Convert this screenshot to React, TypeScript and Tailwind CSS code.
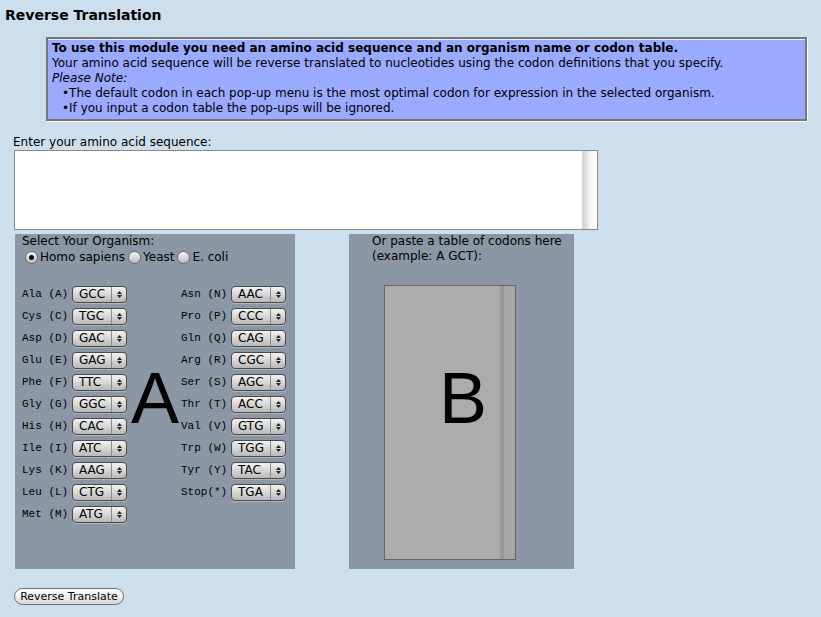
import React from 'react';

const LEFT: [string, string][] = [
  ['Ala (A)', 'GCC'],
  ['Cys (C)', 'TGC'],
  ['Asp (D)', 'GAC'],
  ['Glu (E)', 'GAG'],
  ['Phe (F)', 'TTC'],
  ['Gly (G)', 'GGC'],
  ['His (H)', 'CAC'],
  ['Ile (I)', 'ATC'],
  ['Lys (K)', 'AAG'],
  ['Leu (L)', 'CTG'],
  ['Met (M)', 'ATG'],
];

const RIGHT: [string, string][] = [
  ['Asn (N)', 'AAC'],
  ['Pro (P)', 'CCC'],
  ['Gln (Q)', 'CAG'],
  ['Arg (R)', 'CGC'],
  ['Ser (S)', 'AGC'],
  ['Thr (T)', 'ACC'],
  ['Val (V)', 'GTG'],
  ['Trp (W)', 'TGG'],
  ['Tyr (Y)', 'TAC'],
  ['Stop(*)', 'TGA'],
];

const CodonSelect: React.FC<{ value: string }> = ({ value }) => (
  <div className="w-[55px] h-[17px] rounded-[4px] border border-[#4a4a4a] bg-gradient-to-b from-[#f2f2f2] via-[#d6d6d6] to-[#b8b8b8] flex items-center shadow-[0_1px_0_rgba(255,255,255,0.3)]">
    <span className="flex-1 pl-[6px] text-[12px] leading-none text-black">{value}</span>
    <span className="h-full w-px bg-[#8a8a8a]" />
    <span className="w-[14px] flex flex-col items-center justify-center gap-[1px]">
      <svg width="5" height="3" viewBox="0 0 5 3"><path d="M2.5 0L5 3H0z" fill="#222" /></svg>
      <svg width="5" height="3" viewBox="0 0 5 3"><path d="M0 0h5L2.5 3z" fill="#222" /></svg>
    </span>
  </div>
);

const CodonRow: React.FC<{ label: string; value: string }> = ({ label, value }) => (
  <div className="flex items-center h-[22px]">
    <span className="w-[50px] font-['Liberation_Mono',monospace] text-[11px] text-black whitespace-pre">{label}</span>
    <CodonSelect value={value} />
  </div>
);

const Radio: React.FC<{ checked?: boolean; label: string }> = ({ checked, label }) => (
  <label className="flex items-center gap-[2px] mr-[3px]">
    <span className="w-[13px] h-[13px] rounded-full border border-[#6a6a6a] bg-gradient-to-b from-[#f4f4f4] to-[#bdbdbd] flex items-center justify-center">
      {checked && <span className="w-[5px] h-[5px] rounded-full bg-[#111]" />}
    </span>
    <span>{label}</span>
  </label>
);

export default function App() {
  return (
    <div className="min-h-[617px] bg-[#cddeed] font-['DejaVu_Sans',Verdana,sans-serif] text-black">
      <h1 className="px-[5px] pt-[7px] text-[14px] font-bold leading-[16px]">Reverse Translation</h1>

      {/* Info box */}
      <div className="ml-[46px] mt-[14px] w-[761px] h-[84px] border-2 border-[#777] bg-[#99aaff] shadow-[1px_1px_0_#fff,inset_0_1px_0_#e8ecff] pl-[4px] pt-[2px] text-[12px] leading-[15px]">
        <p className="font-bold">To use this module you need an amino acid sequence and an organism name or codon table.</p>
        <p>Your amino acid sequence will be reverse translated to nucleotides using the codon definitions that you specify.</p>
        <p className="italic">Please Note:</p>
        <p className="pl-[10px]">•The default codon in each pop-up menu is the most optimal codon for expression in the selected organism.</p>
        <p className="pl-[10px]">•If you input a codon table the pop-ups will be ignored.</p>
      </div>

      {/* Sequence entry */}
      <p className="ml-[13px] mt-[14px] text-[12px] leading-[15px]">Enter your amino acid sequence:</p>
      <div className="ml-[14px] w-[584px] h-[80px] border border-[#888] bg-white flex justify-end">
        <div className="w-[15px] h-full bg-gradient-to-r from-[#cfcfcf] via-[#f5f5f5] to-[#ffffff] border-l border-[#d8d8d8]" />
      </div>

      {/* Panels */}
      <div className="flex gap-[54px] mt-[4px] ml-[15px] text-[12px]">
        <div className="relative w-[280px] h-[335px] bg-[#8b97a4] pl-[7px]">
          <p className="leading-[15px]">Select Your Organism:</p>
          <div className="flex items-center h-[16px] pl-[3px]">
            <Radio checked label="Homo sapiens" />
            <Radio label="Yeast" />
            <Radio label="E. coli" />
          </div>
          <div className="grid grid-cols-[159px_1fr] mt-[18px]">
            <div>
              {LEFT.map(([l, v]) => (
                <CodonRow key={l} label={l} value={v} />
              ))}
            </div>
            <div>
              {RIGHT.map(([l, v]) => (
                <CodonRow key={l} label={l} value={v} />
              ))}
            </div>
          </div>
          <span className="absolute left-[116px] top-[128px] font-['Liberation_Sans',Arial,sans-serif] text-[72px] leading-none">A</span>
        </div>

        <div className="w-[225px] h-[335px] bg-[#8b97a4]">
          <p className="pl-[23px] leading-[15px]">
            Or paste a table of codons here
            <br />
            (example: A GCT):
          </p>
          <div className="relative ml-[35px] mt-[21px] w-[132px] h-[275px] border border-[#666] bg-[#acacac] flex justify-end">
            <div className="w-[15px] h-full border-l-4 border-[#989898] bg-[#a6a6a6]" />
            <span className="absolute left-[54px] top-[76px] font-['Liberation_Sans',Arial,sans-serif] text-[72px] leading-none">B</span>
          </div>
        </div>
      </div>

      <button className="ml-[14px] mt-[19px] w-[110px] h-[17px] rounded-full border border-[#6e6e6e] bg-gradient-to-b from-[#ffffff] via-[#f0f0f0] to-[#d4d4d4] text-[11px] leading-none flex items-center justify-center">
        Reverse Translate
      </button>
    </div>
  );
}
